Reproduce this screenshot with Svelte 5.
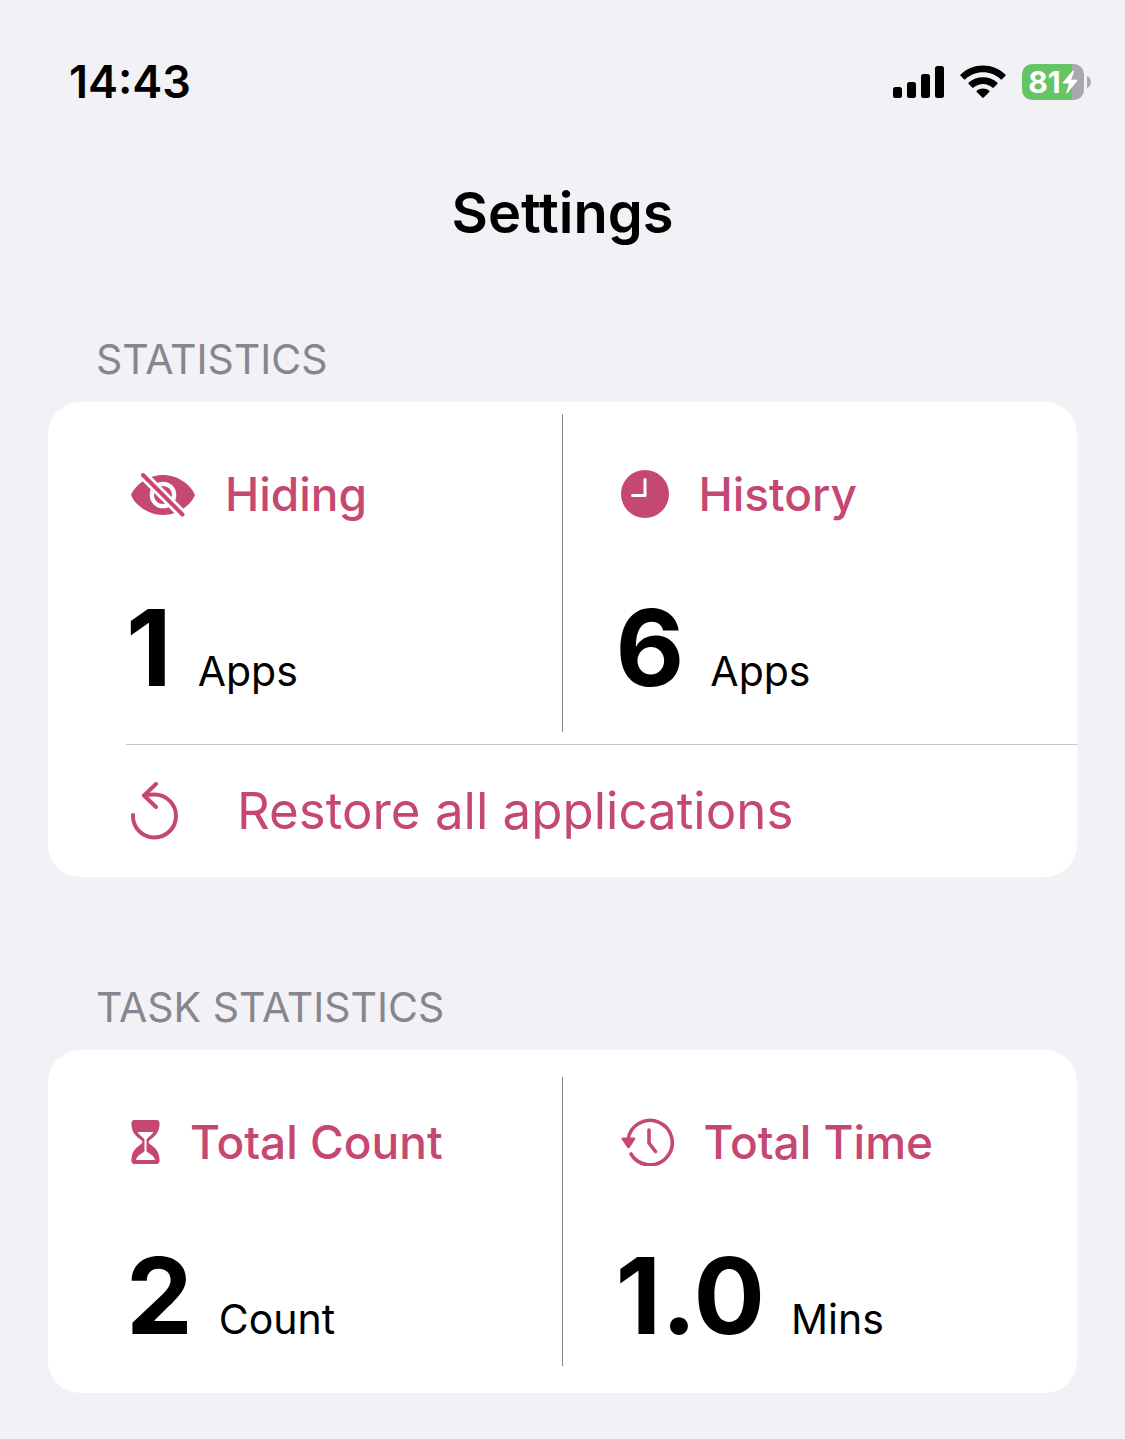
<script>
  const appStats = [
    { icon: 'eye', label: 'Hiding', value: '1', unit: 'Apps' },
    { icon: 'clock', label: 'History', value: '6', unit: 'Apps' }
  ];
  const taskStats = [
    { icon: 'hourglass', label: 'Total Count', value: '2', unit: 'Count' },
    { icon: 'rewind', label: 'Total Time', value: '1.0', unit: 'Mins' }
  ];
</script>

{#snippet icon(name)}
  {#if name === 'eye'}
    <svg width="64" height="48" viewBox="0 0 64 48" aria-hidden="true">
      <path d="M0 25C4 15 17 5 32 5s28 10 32 20C60 35 47 45 32 45S4 35 0 25Z" fill="currentColor" />
      <circle cx="32" cy="25" r="13.3" fill="#fff" />
      <circle cx="32" cy="25" r="6.800" fill="none" stroke="currentColor" stroke-width="4.600" />
      <path d="M8 1 55 48" stroke="#fff" stroke-width="9.500" />
      <path d="M12 5 51.500 44.500" stroke="currentColor" stroke-width="4" stroke-linecap="round" />
    </svg>
  {:else if name === 'clock'}
    <svg width="48" height="48" viewBox="0 0 48 48" aria-hidden="true">
      <circle cx="24" cy="24" r="24" fill="currentColor" />
      <path d="M24 9.500V25.500H11.500" fill="none" stroke="#fff" stroke-width="3" stroke-linecap="round" stroke-linejoin="round" />
    </svg>
  {:else if name === 'hourglass'}
    <svg width="29" height="44" viewBox="0 0 29 44" aria-hidden="true">
      <path d="M4 0H25C28 0 29 2 28.500 5C28 13 24 16 19.500 19.500C17 21.500 17 22.500 19.500 24.500C24 28 28 31 28.500 39C29 42 28 44 25 44H4C1 44 0 42 .5 39C1 31 5 28 9.500 24.500C12 22.500 12 21.500 9.500 19.500C5 16 1 13 .5 5C0 2 1 0 4 0Z" fill="currentColor" />
      <path d="M6.500 12H22.500C21 15 17.500 16.500 15.500 19.500V31C17 33.500 23 34.500 24 40H5C6 34.500 12 33.500 13.500 31V19.500C11.500 16.500 8 15 6.500 12Z" fill="#fff" />
    </svg>
  {:else if name === 'rewind'}
    <svg width="53" height="48" viewBox="0 0 53 48" aria-hidden="true">
      <path d="M7 22A22.200 22.200 0 1 1 10 36" fill="none" stroke="currentColor" stroke-width="3.600" stroke-linecap="round" />
      <path d="M2 19.500H13Q15 19.500 14 21.500L8.800 29.500Q7.500 31 6.200 29.500L.8 21.500Q0 19.500 2 19.500Z" fill="currentColor" />
      <path d="M28 12V25L34.500 33.500" fill="none" stroke="currentColor" stroke-width="3.600" stroke-linecap="round" stroke-linejoin="round" />
    </svg>
  {/if}
{/snippet}

{#snippet stats(items)}
  <div class="stats">
    {#each items as item}
      <div class="stat">
        <h3>{@render icon(item.icon)}<span>{item.label}</span></h3>
        <p><strong>{item.value}</strong><span>{item.unit}</span></p>
      </div>
    {/each}
  </div>
{/snippet}

<div class="screen">
  <div class="status">
    <time>14:43</time>
    <div class="indicators">
      <svg width="51" height="34" viewBox="0 0 51 34" aria-label="Signal" role="img">
        <rect x="0" y="22" width="9" height="11" rx="2.500" />
        <rect x="14" y="17" width="9" height="16" rx="2.500" />
        <rect x="28" y="9" width="9" height="24" rx="2.500" />
        <rect x="42" y="1" width="9" height="32" rx="2.500" />
      </svg>
      <svg width="46" height="34" viewBox="0 0 46 34" aria-label="Wi-Fi" role="img">
        <path d="M.6 9.500C13-2.500 33-2.500 45.400 9.500Q46 10.200 45.400 10.800L42 14.200Q41.300 14.800 40.600 14.200C31 5 15 5 5.400 14.200Q4.700 14.800 4 14.200L.6 10.800Q0 10.200.6 9.500Z" />
        <path d="M8.700 17.600C16.500 10.300 29.500 10.300 37.300 17.600Q38 18.300 37.300 19L33.800 22.400Q33 23 32.300 22.400C27 17.700 19 17.700 13.700 22.400Q13 23 12.200 22.400L8.700 19Q8 18.300 8.700 17.600Z" />
        <path d="M16.800 25.700C20.300 22.700 25.700 22.700 29.200 25.700Q30 26.400 29.200 27.100L23.700 32.600Q23 33.200 22.300 32.600L16.800 27.100Q16 26.400 16.800 25.700Z" />
      </svg>
      <div class="battery">
        <div class="level">
          <span>81</span>
          <svg width="16" height="24" viewBox="0 0 16 24" aria-hidden="true">
            <path d="M10.500 1 .8 12.500Q.3 13.600 1.300 13.600H7L4.300 22.200Q4.300 23.800 5.600 22.800L15.200 11Q15.800 9.800 14.700 9.800H9.200L12 1.600Q12 .2 10.500 1Z" fill="#fff" />
          </svg>
        </div>
        <svg width="4" height="12" viewBox="0 0 4 12" aria-hidden="true"><path d="M0 0C5.300 2 5.300 10 0 12Z" fill="#a9a8ae" /></svg>
      </div>
    </div>
  </div>

  <h1>Settings</h1>

  <main>
    <section>
      <h2>STATISTICS</h2>
      <div class="card">
        {@render stats(appStats)}
        <button type="button">
          <svg width="48" height="58" viewBox="0 0 48 58" aria-hidden="true">
            <path d="M2 33A21.500 21.500 0 1 0 23.500 12.500Q18 12.500 13.500 13.500" fill="none" stroke="currentColor" stroke-width="4" stroke-linecap="round" />
            <path d="M25 2 13 13.500 25 25" fill="none" stroke="currentColor" stroke-width="4" stroke-linecap="round" stroke-linejoin="round" />
          </svg>
          <span>Restore all applications</span>
        </button>
      </div>
    </section>
    <section class="tasks">
      <h2>TASK STATISTICS</h2>
      <div class="card">
        {@render stats(taskStats)}
      </div>
    </section>
  </main>
</div>

<style>
  :global(body) {
    margin: 0;
    background: #f1f1f6;
  }
  .screen {
    min-height: 100vh;
    box-sizing: border-box;
    padding-bottom: 46px;
    background: #f1f1f6;
    color: #000;
    font-family: Inter, "Liberation Sans", sans-serif;
  }
  h1, h2, h3, p {
    margin: 0;
  }
  svg {
    display: block;
    flex: none;
  }
  .status {
    display: flex;
    justify-content: space-between;
    align-items: center;
    padding: 52px 34px 0 69px;
  }
  time {
    font-size: 45px;
    font-weight: 600;
    line-height: 60px;
  }
  .indicators {
    display: flex;
    align-items: center;
    gap: 16px;
  }
  .battery {
    display: flex;
    align-items: center;
    gap: 3px;
  }
  .level {
    display: flex;
    align-items: center;
    justify-content: center;
    gap: 1px;
    width: 62px;
    height: 36px;
    border-radius: 10px;
    background: linear-gradient(90deg, #65c466 81%, #a9a8ae 81%);
    color: #fff;
    font-size: 30px;
    font-weight: 700;
    line-height: 36px;
  }
  h1 {
    padding-top: 65px;
    font-size: 56px;
    font-weight: 600;
    line-height: 72px;
    text-align: center;
  }
  main {
    padding: 86px 48px 0;
  }
  h2 {
    padding: 0 48px 19px;
    color: #87868c;
    font-size: 41px;
    font-weight: 400;
    line-height: 48px;
  }
  .tasks {
    padding-top: 106px;
  }
  .card {
    overflow: hidden;
    border-radius: 32px;
    background: #fff;
  }
  .stats {
    display: grid;
    grid-template-columns: 1fr 1fr;
    padding: 12px 0;
  }
  .tasks .stats {
    padding: 27px 0;
  }
  .stat {
    padding: 50px 20px 19px 78px;
    border-right: 1px solid #88878c;
  }
  .stat + .stat {
    padding-left: 53px;
    border-right: 0;
  }
  .tasks .stat {
    padding-top: 35px;
    padding-bottom: 5px;
  }
  h3 {
    display: flex;
    align-items: center;
    gap: 30px;
    padding-left: 5px;
    color: #c54873;
    font-size: 46px;
    font-weight: 500;
    line-height: 60px;
  }
  p {
    display: flex;
    align-items: baseline;
    gap: 26px;
    padding-top: 59px;
    font-size: 41px;
    line-height: 48px;
  }
  strong {
    font-size: 106px;
    font-weight: 700;
    line-height: 130px;
  }
  button {
    display: flex;
    align-items: center;
    gap: 58px;
    width: calc(100% - 78px);
    margin: 0 0 0 78px;
    padding: 33px 5px;
    border: 0;
    border-top: 1px solid #c6c6c8;
    background: none;
    color: #c54873;
    font-family: inherit;
    font-size: 51px;
    line-height: 66px;
    text-align: left;
    cursor: pointer;
  }
</style>
